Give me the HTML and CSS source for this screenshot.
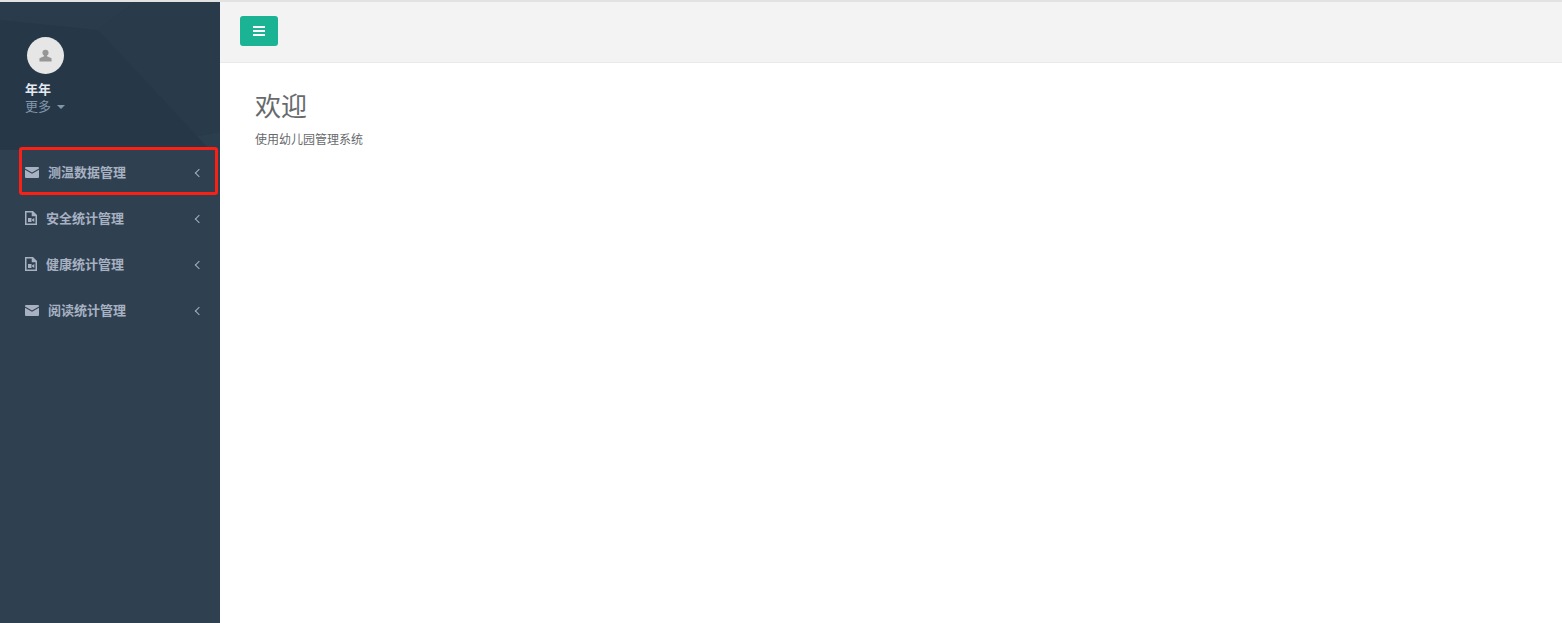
FILE: index.html
```html
<!DOCTYPE html>
<html lang="zh-CN">

<head>
    <meta charset="UTF-8">
    <meta name="viewport" content="width=device-width, initial-scale=1.0">
    <title>幼儿园管理系统</title>
    <link rel="stylesheet" href="styles.css">
</head>

<body>
    <div class="wrapper">
        <nav class="sidebar">
            <div class="profile">
                <svg class="profile_bg" viewBox="0 0 220 148" preserveAspectRatio="none">
                    <polygon points="0,0 220,0 220,148 0,148" fill="#263848" />
                    <polygon points="0,0 135,0 98,28 0,18" fill="#2a3c4c" />
                    <polygon points="135,0 220,0 220,130 197,134 98,28" fill="#293b4b" />
                    <polygon points="197,134 220,130 220,148 210,148" fill="#2b3e4e" />
                </svg>
                <div class="avatar">
                    <svg class="avatar_icon" viewBox="0 0 14 14">
                        <circle cx="7" cy="4" r="3.3" fill="#969696" />
                        <path d="M5.4 6.5h3.2v1.3L13.500 10v3.500H.5V10l4.900-2.200z" fill="#969696" />
                    </svg>
                </div>
                <div class="user_name">年年</div>
                <div class="user_more">更多 <span class="caret"></span></div>
            </div>
            <ul class="menu">
                <li class="menu_item marcado">
                    <svg class="icon_mail" viewBox="0 0 14 11">
                        <path d="M1 0h12a1 1 0 0 1 1 1v.5L7 5.500 0 1.500V1a1 1 0 0 1 1-1z" />
                        <path d="M0 2.800l7 4L14 2.800V10a1 1 0 0 1-1 1H1a1 1 0 0 1-1-1z" />
                    </svg>
                    <span class="label_mail">测温数据管理</span>
                    <span class="arrow"></span>
                </li>
                <li class="menu_item">
                    <svg class="icon_file" viewBox="0 0 12 14">
                        <path fill-rule="evenodd" d="M0 0h8l4 4v10H0zM1.500 1.500v11h9V5.300H6.700V1.500zM3 7h3.500v4H3zM7 8.600L9.300 7v4L7 9.400z" />
                    </svg>
                    <span class="label_file">安全统计管理</span>
                    <span class="arrow"></span>
                </li>
                <li class="menu_item">
                    <svg class="icon_file" viewBox="0 0 12 14">
                        <path fill-rule="evenodd" d="M0 0h8l4 4v10H0zM1.500 1.500v11h9V5.300H6.700V1.500zM3 7h3.500v4H3zM7 8.600L9.300 7v4L7 9.400z" />
                    </svg>
                    <span class="label_file">健康统计管理</span>
                    <span class="arrow"></span>
                </li>
                <li class="menu_item">
                    <svg class="icon_mail" viewBox="0 0 14 11">
                        <path d="M1 0h12a1 1 0 0 1 1 1v.5L7 5.500 0 1.500V1a1 1 0 0 1 1-1z" />
                        <path d="M0 2.800l7 4L14 2.800V10a1 1 0 0 1-1 1H1a1 1 0 0 1-1-1z" />
                    </svg>
                    <span class="label_mail">阅读统计管理</span>
                    <span class="arrow"></span>
                </li>
            </ul>
        </nav>
        <div class="main">
            <div class="topbar">
                <div class="btn_menu">
                    <span></span>
                    <span></span>
                    <span></span>
                </div>
            </div>
            <div class="content">
                <h2>欢迎</h2>
                <p>使用幼儿园管理系统</p>
            </div>
        </div>
    </div>
</body>

</html>
```

FILE: styles.css
```css
* {
    margin: 0;
    padding: 0;
    box-sizing: border-box;
}

html,
body {
    height: 100%;
    overflow: hidden;
}

body {
    background-color: #fff;
    border-top: 2px solid #e2e2e2;
    font-family: "Noto Sans CJK SC", "Open Sans", sans-serif;
    font-size: 13px;
    color: #676a6c;
}

.wrapper {
    display: flex;
    height: 100%;
}

.sidebar {
    width: 220px;
    flex-shrink: 0;
    background-color: #2f4050;
}

.profile {
    position: relative;
    height: 148px;
    padding: 35px 0 0 25px;
}

.profile_bg {
    position: absolute;
    top: 0;
    left: 0;
    width: 100%;
    height: 100%;
}

.avatar {
    position: relative;
    width: 37px;
    height: 37px;
    margin-left: 2px;
    border-radius: 50%;
    background-color: #e6e6e6;
    display: flex;
    align-items: center;
    justify-content: center;
}

.avatar_icon {
    width: 13px;
    height: 13px;
}

.user_name {
    position: relative;
    margin-top: 6px;
    height: 18px;
    line-height: 18px;
    font-weight: 700;
    color: #e4e8ef;
}

.user_more {
    position: relative;
    height: 18px;
    line-height: 16px;
    color: #8095a8;
}

.caret {
    display: inline-block;
    margin-left: 3px;
    vertical-align: middle;
    border-top: 4px solid #8095a8;
    border-left: 4px solid transparent;
    border-right: 4px solid transparent;
}

.menu {
    list-style: none;
    margin-top: -2px;
}

.menu_item {
    position: relative;
    display: flex;
    align-items: center;
    height: 46px;
    padding-left: 25px;
    font-weight: 600;
    color: #a7b1c2;
}

/* contorno vermelho da captura */
.marcado::after {
    content: "";
    position: absolute;
    box-sizing: border-box;
    top: -1px;
    left: 19px;
    width: 199px;
    height: 48px;
    border: 3px solid #fb2016;
    border-radius: 3px;
}

.icon_mail {
    width: 14px;
    height: 11px;
    margin-top: 2px;
    fill: #a7b1c2;
}

.icon_file {
    width: 12px;
    height: 14px;
    margin-top: 2px;
    fill: #a7b1c2;
}

.label_mail {
    margin-left: 9px;
}

.label_file {
    margin-left: 9px;
}

.arrow {
    position: absolute;
    top: 22px;
    left: 196px;
    width: 6px;
    height: 6px;
    border-left: 1.5px solid #a7b1c2;
    border-bottom: 1.5px solid #a7b1c2;
    transform: rotate(45deg);
}

.main {
    flex: 1;
}

.topbar {
    height: 61px;
    padding: 14px 0 0 20px;
    background-color: #f3f3f4;
    border-bottom: 1px solid #e7eaec;
}

.btn_menu {
    width: 38px;
    height: 30px;
    background-color: #1ab394;
    border-radius: 3px;
    display: flex;
    flex-direction: column;
    align-items: center;
    justify-content: center;
    gap: 2px;
}

.btn_menu span {
    display: block;
    width: 12px;
    height: 2px;
    background-color: #fff;
}

.content {
    padding: 24px 0 0 35px;
}

h2 {
    height: 36px;
    line-height: 36px;
    font-size: 26px;
    font-weight: 400;
    color: #676a6c;
}

.content p {
    margin-top: 7px;
    height: 18px;
    line-height: 18px;
    font-size: 12px;
}
```
